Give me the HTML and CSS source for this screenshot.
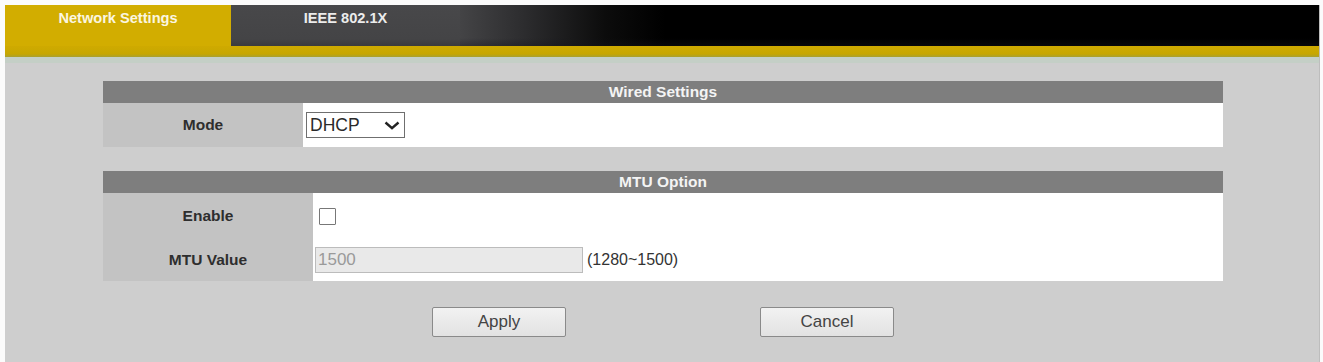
FILE: index.html
```html
<!DOCTYPE html>
<html>
<head>
<meta charset="utf-8">
<link rel="stylesheet" href="styles.css">
</head>
<body>
<div class="frame">
  <div class="tabbar">
    <div class="tab tab-active">Network Settings</div>
    <div class="tab tab-idle">IEEE 802.1X</div>
  </div>
  <div class="gold-strip"></div>
  <div class="light-strip"></div>
  <div class="content">
    <div class="panel">
      <div class="panel-head">Wired Settings</div>
      <div class="row row-mode">
        <div class="label label-w200">Mode</div>
        <div class="value value-mode">
          <div class="select">
            <span>DHCP</span>
            <svg width="16" height="9" viewBox="0 0 16 9"><path d="M1.5 1.5 L8 7.2 L14.5 1.5" fill="none" stroke="#222" stroke-width="2.4"/></svg>
          </div>
        </div>
      </div>
    </div>
    <div class="panel panel-mtu">
      <div class="panel-head">MTU Option</div>
      <div class="row row-enable">
        <div class="label label-w210">Enable</div>
        <div class="value value-check"><span class="checkbox"></span></div>
      </div>
      <div class="row row-mtu">
        <div class="label label-w210">MTU Value</div>
        <div class="value value-input">
          <div class="input">1500</div>
          <span class="range">(1280~1500)</span>
        </div>
      </div>
    </div>
    <div class="buttons">
      <div class="btn">Apply</div>
      <div class="btn">Cancel</div>
    </div>
  </div>
</div>
</body>
</html>
```
FILE: styles.css
```css
* { box-sizing: border-box; }
html, body { margin: 0; padding: 0; background: #fbfbfb; }
body { font-family: "Liberation Sans", Arial, sans-serif; }

.frame {
  margin: 5px 3px 0 5px;
  height: 357px;
  background: #cecece;
  border-right: 1px solid #bdbdbd;
}

.tabbar {
  height: 41px;
  display: flex;
  background:
    linear-gradient(to bottom, rgba(0,0,0,0) 0, rgba(0,0,0,0) 33px, rgba(20,20,30,0.35) 41px),
    linear-gradient(to right, #444446 0, #444446 455px, #2c2c2e 520px, #0c0c0c 600px, #000 660px, #000 100%);
}
.tab {
  height: 41px;
  padding-top: 5px;
  font-size: 14.6px;
  font-weight: bold;
  text-align: center;
  line-height: 16px;
}
.tab-active {
  width: 226px;
  background: #d2ad00;
  color: #fbf6e0;
}
.tab-idle {
  width: 229px;
  background: linear-gradient(to bottom, #48484a 0, #444446 34px, #3b3b3d 41px);
  color: #ececec;
}
.gold-strip {
  height: 11px;
  background: linear-gradient(to bottom, #cfaa00 0, #c7a700 8px, #a8a030 11px);
}
.light-strip {
  height: 6px;
  background: #c4cfc6;
}

.content {
  padding: 18px 0 0 98px;
}
.panel {
  width: 1120px;
  background: #fff;
}
.panel-mtu { margin-top: 24px; }
.panel-head {
  height: 22px;
  background: #7e7e7e;
  color: #f4f4f4;
  font-size: 15.5px;
  font-weight: bold;
  text-align: center;
  line-height: 22px;
}
.row { display: flex; }
.row-mode { height: 44px; }
.row-enable { height: 46px; }
.row-mtu { height: 42px; }
.label {
  background: #c3c3c3;
  font-size: 15.5px;
  font-weight: bold;
  color: #2e2e2e;
  display: flex;
  align-items: center;
  justify-content: center;
}
.label-w200 { width: 200px; }
.label-w210 { width: 210px; }
.value {
  flex: 1;
  display: flex;
  align-items: center;
}
.value-mode { padding-left: 3px; }
.value-check { padding-left: 6px; }
.value-input { padding-left: 2px; }

.select {
  width: 99px;
  height: 26px;
  border: 1px solid #6f6f6f;
  background: #fff;
  display: flex;
  align-items: center;
  justify-content: space-between;
  padding: 0 4px 0 3px;
  font-size: 17.5px;
  color: #2a2a2a;
}
.checkbox {
  width: 17px;
  height: 17px;
  border: 1px solid #777;
  background: #fff;
  border-radius: 1px;
}
.input {
  width: 268px;
  height: 26px;
  border: 1px solid #bcbcbc;
  background: #e9e9e9;
  font-size: 17px;
  color: #9a9a9a;
  padding-left: 2px;
  line-height: 24px;
}
.range {
  margin-left: 4px;
  font-size: 16px;
  color: #333;
}

.buttons {
  width: 1120px;
  display: flex;
  justify-content: center;
  gap: 194px;
  margin-top: 26px;
}
.btn {
  width: 134px;
  height: 30px;
  border: 1px solid #8a8a8a;
  border-radius: 2px;
  background: linear-gradient(to bottom, #f2f2f2, #e2e2e2);
  font-size: 17px;
  color: #444;
  text-align: center;
  line-height: 28px;
}
```
